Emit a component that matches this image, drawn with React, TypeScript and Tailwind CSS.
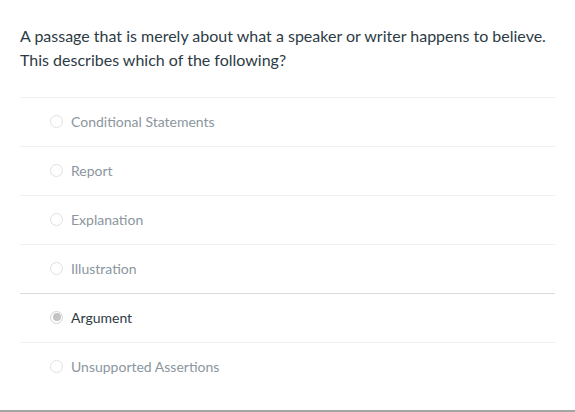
const answers = [
  "Conditional Statements",
  "Report",
  "Explanation",
  "Illustration",
  "Argument",
  "Unsupported Assertions",
];

const selected = 4;

export default function App() {
  return (
    <div className="w-[575px] h-[412px] bg-white font-['Lato','Noto_Sans',sans-serif] flex flex-col">
      <div className="px-5 pt-6">
        <p className="text-[16px] leading-6 text-[#2d3b45]">
          A passage that is merely about what a speaker or writer happens to believe.
          <br />
          This describes which of the following?
        </p>
        <div className="mt-[25px]">
          {answers.map((a, i) => {
            const isSel = i === selected;
            return (
              <div
                key={i}
                className={`h-[49px] flex items-center pl-[30px] pb-[2px] border-t ${
                  isSel ? "border-[#d9dcde]" : "border-[#eef0f1]"
                }`}
              >
                <span
                  className={`w-[13px] h-[13px] rounded-full border flex items-center justify-center ${
                    isSel ? "border-[#d4d4d4] bg-white" : "border-[#e0e0e0] bg-white"
                  }`}
                >
                  {isSel && <span className="w-[8px] h-[8px] rounded-full bg-[#c4c4c4]" />}
                </span>
                <span
                  className={`ml-[8px] text-[14px] ${isSel ? "text-[#2d3b45]" : "text-[#8b969e]"}`}
                >
                  {a}
                </span>
              </div>
            );
          })}
        </div>
      </div>
      <div className="mt-auto border-b-2 border-[#a5a5a5]" />
    </div>
  );
}
